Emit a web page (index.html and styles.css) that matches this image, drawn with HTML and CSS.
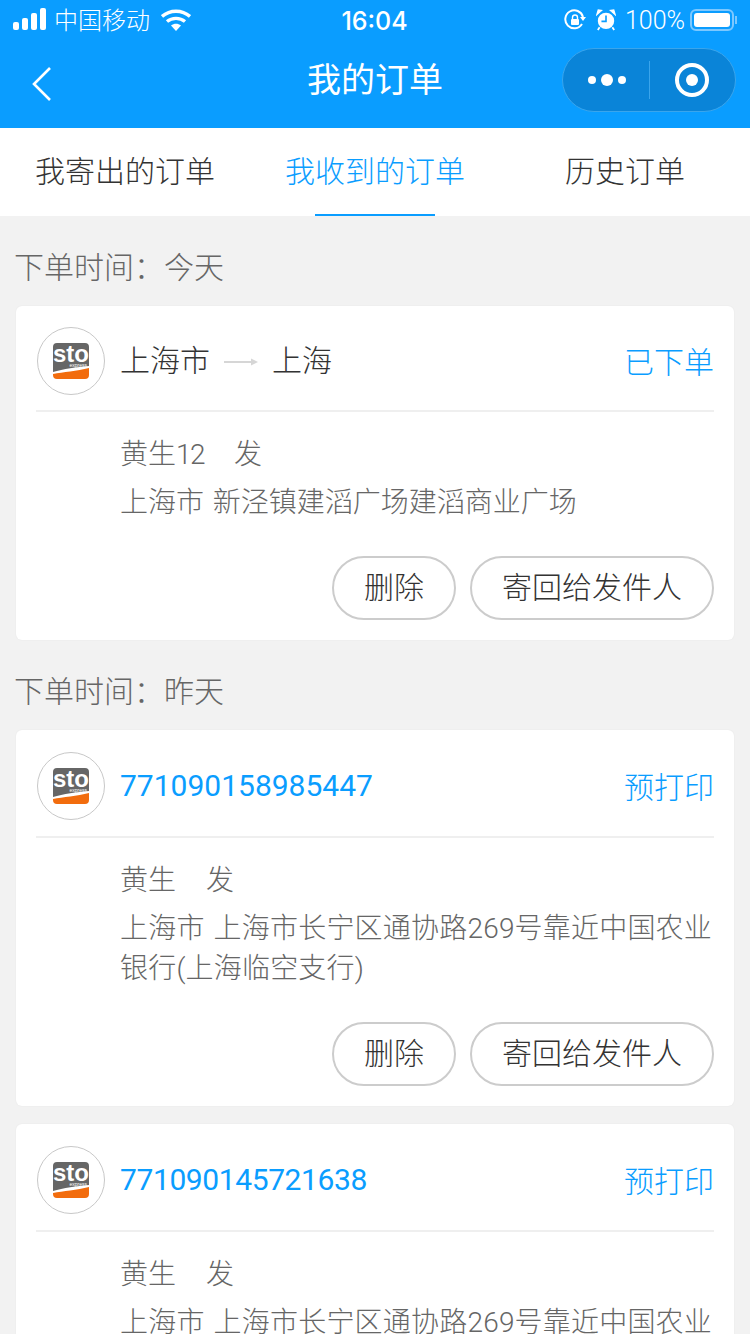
FILE: index.html
```html
<!doctype html>
<html>
<head>
	<meta charset="utf-8">
	<title>我的订单</title>
	<link rel="stylesheet" href="styles.css">
</head>
<body>
	<div class="page">
		<div class="header">
			<div class="status-bar">
				<div class="status-left">
					<svg class="signal" width="34" height="22" viewBox="0 0 34 22">
						<rect x="0" y="14" width="6" height="8" rx="2"/>
						<rect x="9" y="10" width="6" height="12" rx="2"/>
						<rect x="18" y="5" width="6" height="17" rx="2"/>
						<rect x="27" y="0" width="6" height="22" rx="2"/>
					</svg>
					<span class="carrier">中国移动</span>
					<svg class="wifi" width="30" height="22" viewBox="0 0 30 22">
						<path d="M1 7.5C9 .5 21 .5 29 7.5" fill="none" stroke="#fff" stroke-width="3.4"/>
						<path d="M6 12.5C11 8.3 19 8.3 24 12.5" fill="none" stroke="#fff" stroke-width="3.4"/>
						<path d="M10 16.6C13 14 17 14 20 16.6L15 22Z" fill="#fff"/>
					</svg>
				</div>
				<div class="status-time">16:04</div>
				<div class="status-right">
					<svg width="22" height="22" viewBox="0 0 22 22">
						<path d="M18 15A9 9 0 1 1 19 8" fill="none" stroke="#fff" stroke-width="2"/>
						<path d="M16 8H22L19 12Z" fill="#fff"/>
						<rect x="7" y="10" width="8" height="6" rx="1" fill="#fff"/>
						<path d="M8.5 10V8.500A2.500 2.500 0 0 1 13.500 8.500V10" fill="none" stroke="#fff" stroke-width="1.400"/>
					</svg>
					<svg class="alarm" width="20" height="22" viewBox="0 0 22 24">
						<circle cx="11" cy="13" r="9" fill="#fff"/>
						<path d="M11 7V13.500H6" fill="none" stroke="#0a9dff" stroke-width="1.800"/>
						<path d="M1 6L6 1.500L2.500 1Z M21 6L16 1.500L19.500 1Z" fill="#fff" stroke="#fff" stroke-width="1.500"/>
						<path d="M4 20L2 23M18 20L20 23" stroke="#fff" stroke-width="2"/>
					</svg>
					<span class="battery-text">100%</span>
					<div class="battery"><div class="battery-fill"></div></div>
					<div class="battery-cap"></div>
				</div>
			</div>
			<div class="nav-bar">
				<svg class="back" width="22" height="36" viewBox="0 0 22 36">
					<path d="M19 2L3 18L19 34" fill="none" stroke="#fff" stroke-width="2.600"/>
				</svg>
				<div class="nav-title">我的订单</div>
				<div class="capsule">
					<div class="capsule-more">
						<span class="dot"></span><span class="dot dot-big"></span><span class="dot"></span>
					</div>
					<div class="capsule-line"></div>
					<div class="capsule-close"><span class="ring"><span class="ring-dot"></span></span></div>
				</div>
			</div>
		</div>

		<div class="tabs">
			<div class="tab">我寄出的订单</div>
			<div class="tab tab-active">我收到的订单</div>
			<div class="tab">历史订单</div>
		</div>

		<div class="group-title">下单时间：今天</div>

		<div class="card">
			<div class="card-head">
				<div class="logo">
					<svg class="logo-mark" width="44" height="44" viewBox="-4 -4 44 44">
						<path d="M4 0H32Q36 0 36 4V23C24 24 10 26 0 29V4Q0 0 4 0Z" fill="#666"/>
						<path d="M36 25V32Q36 36 32 36H4Q0 36 0 32V31C10 29 24 28 36 25Z" fill="#f26c0d"/>
						<text class="logo-sto" x="18" y="19" text-anchor="middle">sto</text>
						<text class="logo-sub" x="34" y="24" text-anchor="end">express</text>
					</svg>
				</div>
				<div class="route">
					<span>上海市</span>
					<svg class="arrow" width="34" height="10" viewBox="0 0 34 10"><path d="M0 5H29" stroke="#d6d6d6" stroke-width="2"/><path d="M27 1.500L34 5L27 8.500Z" fill="#d6d6d6"/></svg>
					<span>上海</span>
				</div>
				<div class="state">已下单</div>
			</div>
			<div class="card-body">
				<div class="sender"><span>黄生<span class="tight">12</span></span><span>发</span></div>
				<div class="address">上海市 新泾镇建滔广场建滔商业广场</div>
			</div>
			<div class="card-btns">
				<div class="btn btn-small">删除</div>
				<div class="btn">寄回给发件人</div>
			</div>
		</div>

		<div class="group-title">下单时间：昨天</div>

		<div class="card card-tall">
			<div class="card-head">
				<div class="logo">
					<svg class="logo-mark" width="44" height="44" viewBox="-4 -4 44 44">
						<path d="M4 0H32Q36 0 36 4V23C24 24 10 26 0 29V4Q0 0 4 0Z" fill="#666"/>
						<path d="M36 25V32Q36 36 32 36H4Q0 36 0 32V31C10 29 24 28 36 25Z" fill="#f26c0d"/>
						<text class="logo-sto" x="18" y="19" text-anchor="middle">sto</text>
						<text class="logo-sub" x="34" y="24" text-anchor="end">express</text>
					</svg>
				</div>
				<div class="route route-no">771090158985447</div>
				<div class="state">预打印</div>
			</div>
			<div class="card-body">
				<div class="sender"><span>黄生</span><span>发</span></div>
				<div class="address">上海市 上海市长宁区通协路269号靠近中国农业银行(上海临空支行)</div>
			</div>
			<div class="card-btns">
				<div class="btn btn-small">删除</div>
				<div class="btn">寄回给发件人</div>
			</div>
		</div>

		<div class="card card-tall card-next">
			<div class="card-head">
				<div class="logo">
					<svg class="logo-mark" width="44" height="44" viewBox="-4 -4 44 44">
						<path d="M4 0H32Q36 0 36 4V23C24 24 10 26 0 29V4Q0 0 4 0Z" fill="#666"/>
						<path d="M36 25V32Q36 36 32 36H4Q0 36 0 32V31C10 29 24 28 36 25Z" fill="#f26c0d"/>
						<text class="logo-sto" x="18" y="19" text-anchor="middle">sto</text>
						<text class="logo-sub" x="34" y="24" text-anchor="end">express</text>
					</svg>
				</div>
				<div class="route route-no route-narrow">771090145721638</div>
				<div class="state">预打印</div>
			</div>
			<div class="card-body">
				<div class="sender"><span>黄生</span><span>发</span></div>
				<div class="address">上海市 上海市长宁区通协路269号靠近中国农业银行(上海临空支行)</div>
			</div>
		</div>
	</div>
</body>
</html>
```

FILE: styles.css
```css
* {
	box-sizing: border-box;
}

html, body {
	margin: 0;
	padding: 0;
}

body {
	background-color: #f2f2f2;
	font-family: "Roboto", "Noto Sans CJK SC", sans-serif;
	font-weight: 300;
	color: #333;
}

.page {
	width: 750px;
	height: 1334px;
	overflow: hidden;
}

.header {
	height: 128px;
	background-color: #0a9dff;
	color: #fff;
}

.status-bar {
	height: 40px;
	padding: 0 13px;
	display: grid;
	grid-template-columns: 1fr auto 1fr;
	align-items: center;
}

.status-left, .status-right {
	display: flex;
	align-items: center;
}

.signal {
	fill: #fff;
	margin-top: -2px;
}

.carrier {
	font-size: 24px;
	line-height: 34px;
	margin: 2px 0 0 7px;
}

.wifi {
	margin-left: 11px;
}

.status-time {
	font-family: "Inter", sans-serif;
	font-size: 25px;
	font-weight: 500;
	padding-right: 1px;
	padding-top: 1px;
}

.status-right {
	justify-content: flex-end;
}

.alarm {
	margin-left: 10px;
}

.battery-text {
	font-size: 25px;
	margin-left: 9px;
}

.battery {
	width: 44px;
	height: 22px;
	margin-left: 5px;
	padding: 2px;
	border: 2px solid #7cc8ff;
	border-radius: 6px;
}

.battery-fill {
	height: 100%;
	background-color: #fff;
	border-radius: 3px;
}

.battery-cap {
	width: 2px;
	height: 8px;
	margin-left: 1px;
	background-color: #7cc8ff;
}

.nav-bar {
	height: 88px;
	padding: 0 14px 8px 31px;
	display: flex;
	align-items: center;
	justify-content: space-between;
	position: relative;
}

.back {
	margin-top: 8px;
}

.nav-title {
	position: absolute;
	left: 0;
	right: 0;
	top: 15px;
	text-align: center;
	font-size: 34px;
	font-weight: 400;
	line-height: 50px;
}

.capsule {
	width: 174px;
	height: 64px;
	display: flex;
	align-items: center;
	background-color: #0a84d8;
	border: 1px solid #3aa5ec;
	border-radius: 32px;
}

.capsule-more {
	width: 86px;
	padding-left: 2px;
	display: flex;
	align-items: center;
	justify-content: center;
	gap: 5px;
}

.dot {
	width: 8px;
	height: 8px;
	border-radius: 50%;
	background-color: #fff;
}

.dot-big {
	width: 12px;
	height: 12px;
}

.capsule-line {
	width: 1px;
	height: 38px;
	background-color: #3aa5ec;
}

.capsule-close {
	flex: 1;
	padding-right: 2px;
	display: flex;
	align-items: center;
	justify-content: center;
}

.ring {
	width: 34px;
	height: 34px;
	border: 4px solid #fff;
	border-radius: 50%;
	display: flex;
	align-items: center;
	justify-content: center;
}

.ring-dot {
	width: 12px;
	height: 12px;
	border-radius: 50%;
	background-color: #fff;
}

.tabs {
	height: 88px;
	background-color: #fff;
	display: flex;
}

.tab {
	flex: 1;
	position: relative;
	text-align: center;
	font-size: 30px;
	line-height: 88px;
	color: #333;
}

.tab-active {
	color: #0a9dff;
}

.tab-active::after {
	content: "";
	position: absolute;
	left: 65px;
	bottom: 0;
	width: 120px;
	height: 2px;
	background-color: #0a9dff;
}

.group-title {
	padding-left: 14px;
	height: 90px;
	font-size: 30px;
	line-height: 104px;
	color: #666;
}

.card {
	margin: 0 16px;
	padding: 0 20px;
	background-color: #fff;
	border-radius: 6px;
	box-shadow: 0 0 2px rgba(0, 0, 0, 0.06);
}

.card-next {
	margin-top: 18px;
}

.card-head {
	height: 106px;
	padding-top: 21px;
	display: flex;
	align-items: flex-start;
	border-bottom: 2px solid #efefef;
}

.card-tall .card-head {
	height: 108px;
	padding-top: 22px;
}

.logo {
	width: 68px;
	height: 68px;
	margin-left: 1px;
	flex-shrink: 0;
	border: 1px solid #c8c8c8;
	border-radius: 50%;
	display: flex;
	align-items: center;
	justify-content: center;
}

.logo-sto {
	font-family: "Liberation Sans", sans-serif;
	font-weight: bold;
	font-size: 24px;
	fill: #fff;
}

.logo-sub {
	font-family: "Liberation Sans", sans-serif;
	font-size: 5px;
	font-weight: normal;
	fill: #fff;
}

.route {
	margin-left: 15px;
	flex: 1;
	display: flex;
	align-items: center;
	font-size: 30px;
	line-height: 68px;
	color: #333;
}

.route-no {
	color: #0a9dff;
	font-weight: 400;
}

.route-narrow {
	letter-spacing: -0.4px;
}

.arrow {
	margin: 2px 14px 0;
}

.state {
	font-size: 30px;
	line-height: 72px;
	color: #0a9dff;
}

.card-body {
	padding: 23px 0 0 84px;
	font-size: 28px;
	line-height: 40px;
	word-spacing: 2px;
	color: #666;
}

.card-tall .address {
	letter-spacing: 0.2px;
}

.sender {
	display: flex;
	gap: 30px;
	margin-bottom: 8px;
}

.tight {
	letter-spacing: -1.5px;
}

.card-btns {
	padding: 33px 0 20px;
	display: flex;
	justify-content: flex-end;
	gap: 14px;
}

.btn {
	width: 244px;
	height: 64px;
	border: 2px solid #ccc;
	border-radius: 32px;
	text-align: center;
	font-size: 30px;
	line-height: 60px;
	color: #333;
}

.btn-small {
	width: 124px;
}
```
